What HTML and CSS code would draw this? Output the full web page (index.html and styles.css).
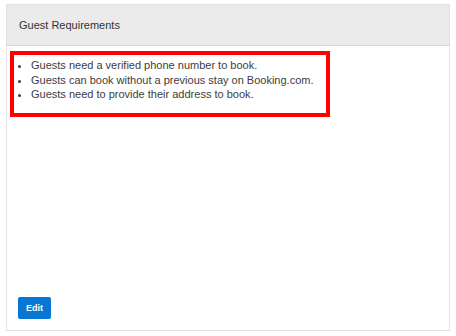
FILE: index.html
```html
<!DOCTYPE html>
<html lang="en">

<head>
    <meta charset="UTF-8">
    <meta name="viewport" content="width=device-width, initial-scale=1.0">
    <link rel="stylesheet" href="styles.css">
    <title>Guest Requirements</title>
</head>

<body>
    <div class="card">
        <div class="card-header">Guest Requirements</div>
        <div class="card-body">
            <div class="highlight">
                <ul class="rules">
                    <li>Guests need a verified phone number to book.</li>
                    <li>Guests can book without a previous stay on Booking.com.</li>
                    <li>Guests need to provide their address to book.</li>
                </ul>
            </div>
            <button class="btn">Edit</button>
        </div>
    </div>
</body>

</html>
```

FILE: styles.css
```css
* {
    margin: 0;
    padding: 0;
    box-sizing: border-box;
}

body {
    background: #ffffff;
    font-family: "Liberation Sans", Arial, sans-serif;
    color: #3b3b3b;
}

.card {
    margin: 4px 6px 5px 6px;
    height: 327px;
    border: 1px solid #e2e2e2;
    display: flex;
    flex-direction: column;
}

.card-header {
    height: 41px;
    background-color: #ebebeb;
    border-bottom: 1px solid #d6d6d6;
    padding-left: 12px;
    display: flex;
    align-items: center;
    font-size: 11px;
    color: #333;
}

.card-body {
    flex: 1;
    display: flex;
    flex-direction: column;
    padding: 5px 11px 11px 3px;
}

.highlight {
    width: 320px;
    border: 4px solid #ff0000;
    padding: 3px 0 11px 17px;
}

.rules {
    font-size: 11px;
    line-height: 14.5px;
    color: #3d3d3d;
}

.rules li {
    list-style: disc;
}

.btn {
    margin-top: auto;
    margin-left: 8px;
    width: 33px;
    height: 22px;
    border: none;
    border-radius: 2px;
    background-color: #0877d4;
    color: #fff;
    font-family: "Liberation Sans", Arial, sans-serif;
    font-size: 9px;
    font-weight: bold;
}
```
